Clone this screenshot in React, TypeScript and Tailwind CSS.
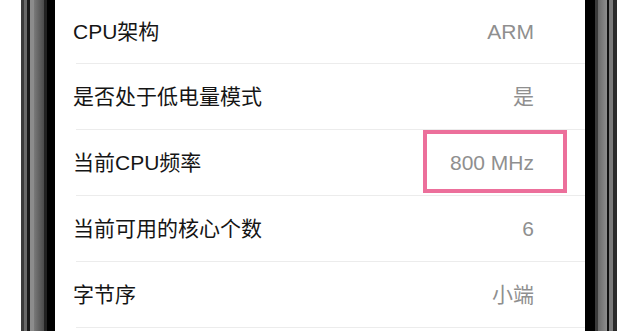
export default function App() {
  const rows: { label: string; value: string; first?: boolean; boxed?: boolean }[] = [
    { label: "CPU架构", value: "ARM", first: true },
    { label: "是否处于低电量模式", value: "是" },
    { label: "当前CPU频率", value: "800 MHz", boxed: true },
    { label: "当前可用的核心个数", value: "6" },
    { label: "字节序", value: "小端" },
  ];
  return (
    <div
      className="flex h-[331px] w-[640px] overflow-hidden bg-white"
      style={{ fontFamily: '"Liberation Sans", "Noto Sans CJK SC", sans-serif' }}
    >
      <div className="w-[21px] shrink-0 bg-white" />
      <div className="flex w-[34px] shrink-0">
        <div className="w-[3px] bg-[#3c3c3c]" />
        <div className="w-[3px] bg-[#6a6a6a]" />
        <div className="w-[3px] bg-[#1a1a1a]" />
        <div className="w-[4px] bg-[#8c8c8c]" />
        <div className="w-[10px] bg-gradient-to-r from-[#7a7a7a] to-[#4a4a4a]" />
        <div className="w-[3px] bg-[#222]" />
        <div className="w-[8px] bg-black" />
      </div>
      <div className="flex w-[530px] shrink-0 flex-col bg-white">
        {rows.map((r) => (
          <div key={r.label} className="pl-[21px]">
            <div
              className={`relative flex items-center justify-between border-b border-[#ececec] pr-[51px] ${
                r.first ? "h-[64px]" : "h-[66px]"
              }`}
            >
              <span className="-ml-[3px] whitespace-nowrap text-[21px] text-[#151515]">{r.label}</span>
              <span className="whitespace-nowrap text-[21px] text-[#8f8f8f]">{r.value}</span>
              {r.boxed && (
                <div className="absolute left-[347px] top-0 h-[63px] w-[144px] border-[4px] border-[#ec6f9b]" />
              )}
            </div>
          </div>
        ))}
      </div>
      <div className="flex w-[32px] shrink-0">
        <div className="w-[10px] bg-black" />
        <div className="w-[3px] bg-[#3a3a3a]" />
        <div className="w-[9px] bg-gradient-to-r from-[#6a6a6a] to-[#8e8e8e]" />
        <div className="w-[2px] bg-[#111]" />
        <div className="w-[4px] bg-[#7a7a7a]" />
        <div className="w-[4px] bg-[#2a2a2a]" />
      </div>
      <div className="w-[23px] shrink-0 bg-white" />
    </div>
  );
}
